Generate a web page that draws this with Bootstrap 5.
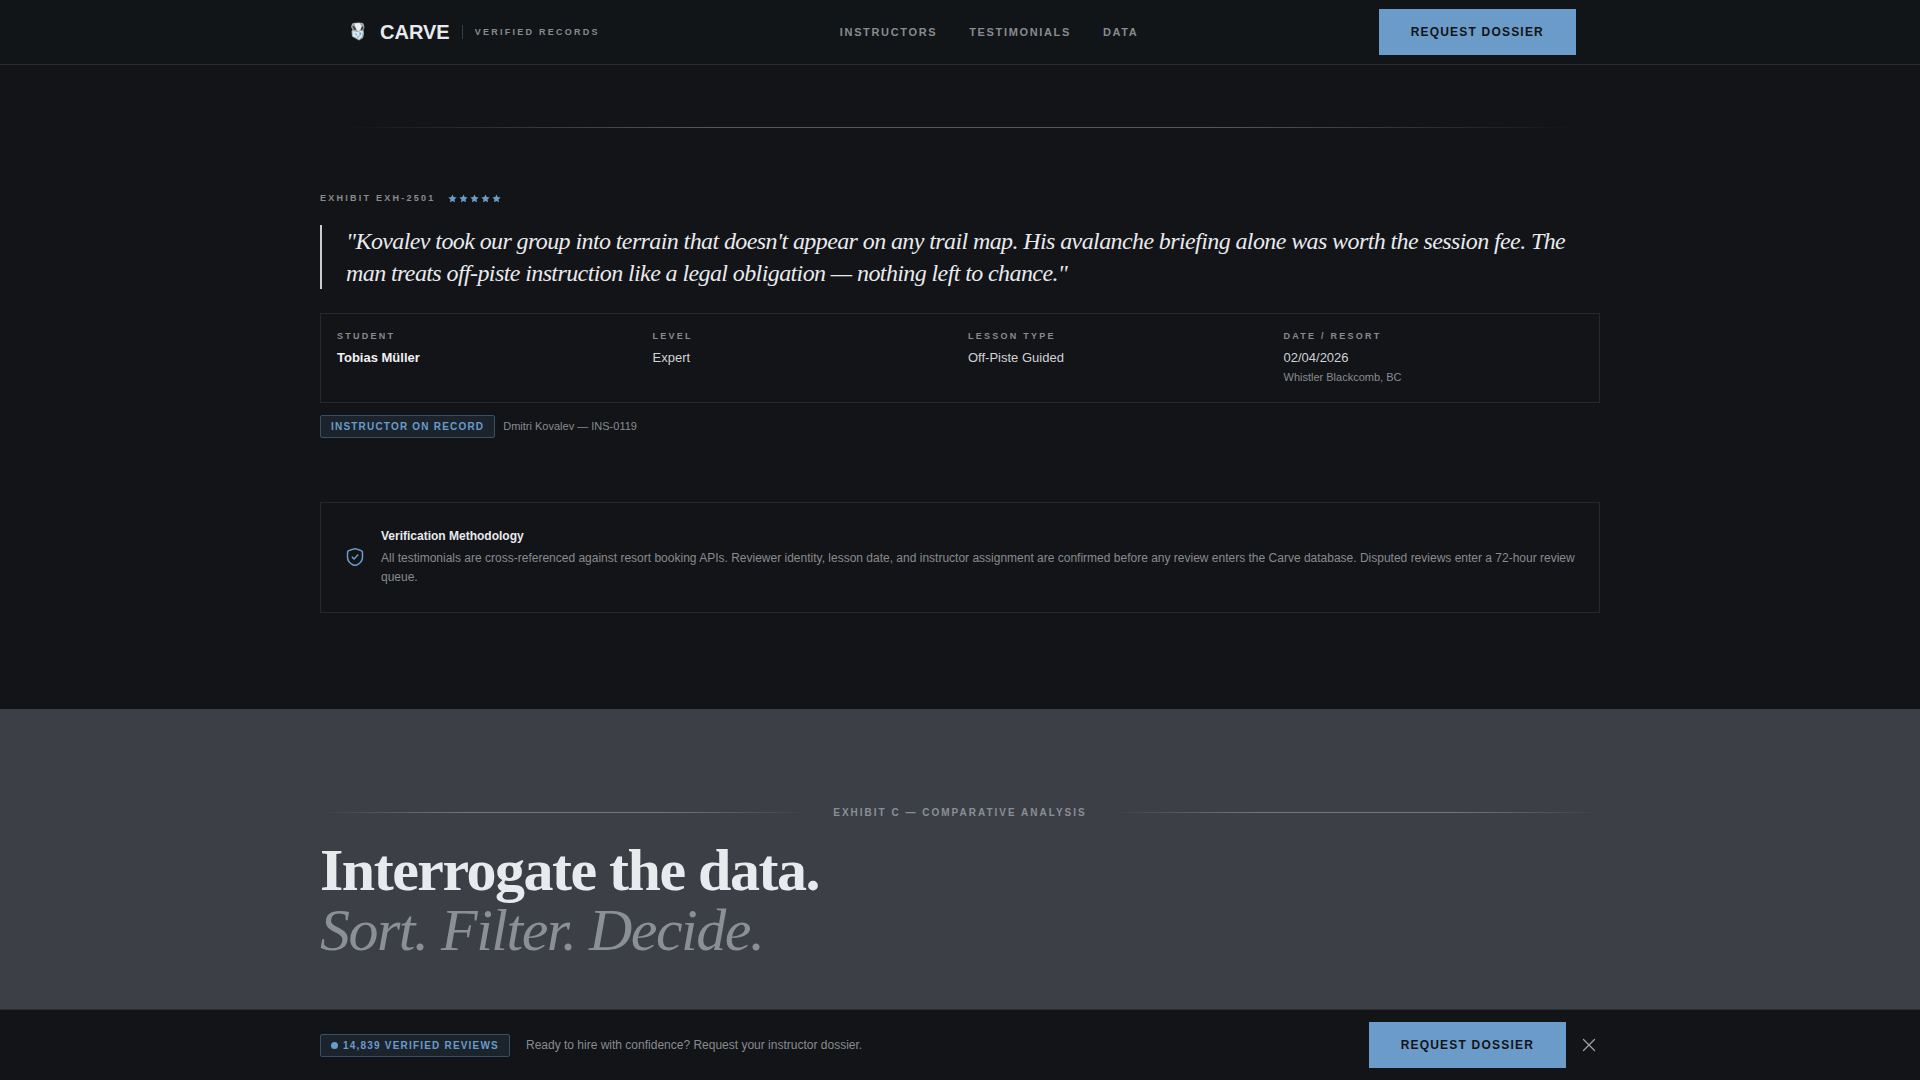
<!DOCTYPE html>
<html lang="en">
<head>
<meta charset="utf-8">
<meta name="viewport" content="width=device-width, initial-scale=1">
<title>Carve — Verified Records</title>
<link href="https://cdn.jsdelivr.net/npm/bootstrap@5.3.0/dist/css/bootstrap.min.css" rel="stylesheet">
<style>
  :root { --ink: #121417; --silver: #e8eaee; --muted: #898b8f; --ice: #6b9bc8; --rule: #26292c; }
  body { background: var(--ink); color: var(--silver); font-family: "Liberation Sans", Arial, sans-serif; line-height: 1.5; }
  .wrap { max-width: 1280px; margin: 0 auto; width: 100%; }
  .site-nav { height: 65px; background: #111518; border-bottom: 1px solid #2a2d30; }
  .brand-word { font-size: 20px; line-height: 30px; font-weight: 700; color: var(--silver); }
  .brand-rule { width: 1px; height: 14px; background: #3a3d41; margin: 0 12px; }
  .eyebrow { font-size: 9px; line-height: 13px; font-weight: 700; letter-spacing: .25em; text-transform: uppercase; color: var(--muted); }
  .menu-row { gap: 32px; }
  .menu-link { font-size: 11px; font-weight: 700; letter-spacing: .15em; text-transform: uppercase; color: var(--muted); text-decoration: none; }
  .menu-link:hover { color: var(--silver); }
  .btn-dossier { --bs-btn-color: #121417; --bs-btn-bg: #6b9bc8; --bs-btn-hover-bg: #84afd6; --bs-btn-active-bg: #84afd6; --bs-btn-border-width: 0; --bs-btn-border-radius: 0; --bs-btn-padding-x: 32px; --bs-btn-padding-y: 14px; --bs-btn-font-size: 12px; --bs-btn-font-weight: 700; --bs-btn-line-height: 18px; letter-spacing: .1em; }
  .fade-rule { height: 1px; background: linear-gradient(90deg, transparent, #56595c 30%, #56595c 70%, transparent); }
  .exhibit { padding-top: 127px; padding-bottom: 96px; }
  .exhibit-item { padding-top: 64px; }
  .exhibit-head { gap: 12px; margin-bottom: 20px; }
  .stars { gap: 2px; color: var(--ice); }
  .quote-text { font-family: "Liberation Serif", "Times New Roman", serif; font-style: italic; font-size: 24px; line-height: 32px; letter-spacing: -0.025em; border-left: 2px solid #c9cbcf; }
  .outlined { border: 1px solid var(--rule); }
  .facts { display: grid; grid-template-columns: repeat(4, 1fr); gap: 16px; padding: 16px; margin-bottom: 12px; }
  .facts dt { margin-bottom: 5px; }
  .facts dd { margin: 0; font-size: 13px; line-height: 20px; color: #d0d2d6; }
  .facts dd.student-name { font-weight: 700; color: #f0f1f4; }
  .facts dd.note { margin-top: 1px; }
  .facts dd.note, .note { font-size: 11px; line-height: 17px; color: var(--muted); }
  .tag { display: inline-flex; align-items: center; gap: 5px; font-size: 10px; line-height: 15px; font-weight: 700; letter-spacing: .12em; padding: 3px 10px; border: 1px solid #38505f; border-radius: 2px; background: #1b242d; color: var(--ice); }
  .tag-dot { width: 7px; height: 7px; border-radius: 50%; background: var(--ice); }
  .method { padding: 24px 24px 25px; margin-top: 64px; }
  .method-title { font-size: 12px; line-height: 18px; font-weight: 700; margin: 0 0 4px; }
  .method-text { font-size: 12px; line-height: 19px; color: var(--muted); }
  .compare { background: #3c3f46; padding-top: 96px; padding-bottom: 120px; }
  .compare .fade-rule { background: linear-gradient(90deg, transparent, #74777b 30%, #74777b 70%, transparent); }
  .compare-head { gap: 24px; margin-bottom: 20px; }
  .compare-label { font-size: 10px; line-height: 15px; font-weight: 700; letter-spacing: .2em; color: #8a8f96; }
  .headline { font-family: "Liberation Serif", "Times New Roman", serif; font-size: 60px; line-height: 60px; font-weight: 700; letter-spacing: -0.025em; }
  .headline em { font-weight: 400; color: #8a9096; }
  .action-bar { background: var(--ink); border-top: 1px solid #2a2d30; padding: 12px 0; }
  .action-text { font-size: 12px; line-height: 18px; color: var(--muted); }
  .action-end { gap: 12px; }
  .dismiss { color: #a0a2a6; line-height: 0; }
</style>
</head>
<body>
<header class="site-nav fixed-top">
  <div class="wrap h-100 px-4 d-flex align-items-center justify-content-between">
    <a href="#" class="d-flex align-items-center text-decoration-none">
      <svg class="me-2" width="28" height="28" viewBox="0 0 28 28" aria-hidden="true">
        <path d="M9 5l6-.5 4 .5 1 2 .5 3-1 1 .5 5-1 4-4 2.500-3.500-2-3.500-2-.5-5 1-2-1.500-2.500 1-3z" fill="#9fa8aa"/>
        <path d="M10.500 5.500l5-.5 2 3 0 3-3 2-2-1z" fill="#eef0ee"/>
        <path d="M8.500 8l1.500 0 1.500 2 1 2-2 0-1.500-2zM17.500 9l1.500-1 .5 2-2 3-1-1z" fill="#3c4448"/>
        <path d="M8.500 13l5 1 4-1.500 1.500 1-1 5-3 3-3-2-3-1z" fill="#dce9ef"/>
        <path d="M11 14.500l2 2-1 1.500zM15.500 14l2 1-2 4zM13 18l2 .5-1 2z" fill="#5e9fc4"/>
      </svg>
      <span class="brand-word">CARVE</span>
      <span class="brand-rule"></span>
      <span class="eyebrow">Verified Records</span>
    </a>
    <nav class="menu-row d-flex" aria-label="Main">
      <a class="menu-link" href="#instructors">Instructors</a>
      <a class="menu-link" href="#testimonials">Testimonials</a>
      <a class="menu-link" href="#data">Data</a>
    </nav>
    <button type="button" class="btn btn-dossier">REQUEST DOSSIER</button>
  </div>
</header>

<main>
  <section class="exhibit" id="testimonials">
    <div class="wrap">
      <div class="fade-rule mx-4"></div>
      <article class="exhibit-item">
        <div class="exhibit-head d-flex align-items-center">
          <span class="eyebrow">Exhibit EXH-2501</span>
          <svg width="0" height="0" class="position-absolute" aria-hidden="true"><symbol id="star" viewBox="0 0 18 18"><path fill="currentColor" d="M9 .8l2.500 5.300 5.800.7-4.300 4 1.100 5.800L9 13.800l-5.100 2.800L5 10.800l-4.300-4 5.800-.7z"/></symbol></svg>
          <span class="stars d-flex" role="img" aria-label="5 out of 5 stars">
            <svg width="9" height="9"><use href="#star"/></svg>
            <svg width="9" height="9"><use href="#star"/></svg>
            <svg width="9" height="9"><use href="#star"/></svg>
            <svg width="9" height="9"><use href="#star"/></svg>
            <svg width="9" height="9"><use href="#star"/></svg>
          </span>
        </div>
        <blockquote class="quote-text ps-4 mb-4">"Kovalev took our group into terrain that doesn't appear on any trail map. His avalanche briefing alone was worth the session fee. The man treats off-piste instruction like a legal obligation — nothing left to chance."</blockquote>
        <dl class="facts outlined">
          <div>
            <dt class="eyebrow">Student</dt>
            <dd class="student-name">Tobias Müller</dd>
          </div>
          <div>
            <dt class="eyebrow">Level</dt>
            <dd>Expert</dd>
          </div>
          <div>
            <dt class="eyebrow">Lesson Type</dt>
            <dd>Off-Piste Guided</dd>
          </div>
          <div>
            <dt class="eyebrow">Date / Resort</dt>
            <dd>02/04/2026</dd>
            <dd class="note">Whistler Blackcomb, BC</dd>
          </div>
        </dl>
        <div class="d-flex align-items-center gap-2">
          <span class="tag">INSTRUCTOR ON RECORD</span>
          <span class="note">Dmitri Kovalev — INS-0119</span>
        </div>
      </article>

      <aside class="method outlined d-flex align-items-center gap-3">
        <svg class="flex-shrink-0" width="20" height="20" viewBox="0 0 24 24" fill="none" stroke="#6b9bc8" stroke-width="1.8" stroke-linecap="round" stroke-linejoin="round" aria-hidden="true">
          <path d="M3 10.417c0-3.198 0-4.797.378-5.335.377-.537 1.880-1.052 4.887-2.081l.573-.196C10.405 2.268 11.188 2 12 2s1.595.268 3.162.805l.573.196c3.007 1.029 4.510 1.544 4.887 2.081C21 5.620 21 7.220 21 10.417v1.574c0 5.638-4.239 8.375-6.899 9.536C13.380 21.842 13.020 22 12 22s-1.380-.158-2.101-.473C7.239 20.365 3 17.630 3 11.991z"/>
          <path d="m8.800 12.200 2 2.200 4.600-4.800"/>
        </svg>
        <div>
          <h3 class="method-title">Verification Methodology</h3>
          <p class="method-text mb-0">All testimonials are cross-referenced against resort booking APIs. Reviewer identity, lesson date, and instructor assignment are confirmed before any review enters the Carve database. Disputed reviews enter a 72-hour review queue.</p>
        </div>
      </aside>
    </div>
  </section>

  <section class="compare" id="data">
    <div class="wrap">
      <div class="compare-head d-flex align-items-center">
        <div class="fade-rule flex-grow-1"></div>
        <span class="compare-label">EXHIBIT C — COMPARATIVE ANALYSIS</span>
        <div class="fade-rule flex-grow-1"></div>
      </div>
      <h2 class="headline mb-0">Interrogate the data.<br><em>Sort. Filter. Decide.</em></h2>
    </div>
  </section>
</main>

<div class="action-bar fixed-bottom">
  <div class="wrap d-flex align-items-center justify-content-between">
    <div class="d-flex align-items-center gap-3">
      <span class="tag"><span class="tag-dot"></span>14,839 VERIFIED REVIEWS</span>
      <span class="action-text">Ready to hire with confidence? Request your instructor dossier.</span>
    </div>
    <div class="action-end d-flex align-items-center">
      <button type="button" class="btn btn-dossier">REQUEST DOSSIER</button>
      <button type="button" class="dismiss border-0 bg-transparent p-1" aria-label="Dismiss">
        <svg width="14" height="14" viewBox="0 0 14 14" fill="none" stroke="currentColor" stroke-width="1.300" stroke-linecap="round"><path d="M1.500 1.500l11 11M12.500 1.500l-11 11"/></svg>
      </button>
    </div>
  </div>
</div>
<script src="https://cdn.jsdelivr.net/npm/bootstrap@5.3.0/dist/js/bootstrap.bundle.min.js"></script>
</body>
</html>
